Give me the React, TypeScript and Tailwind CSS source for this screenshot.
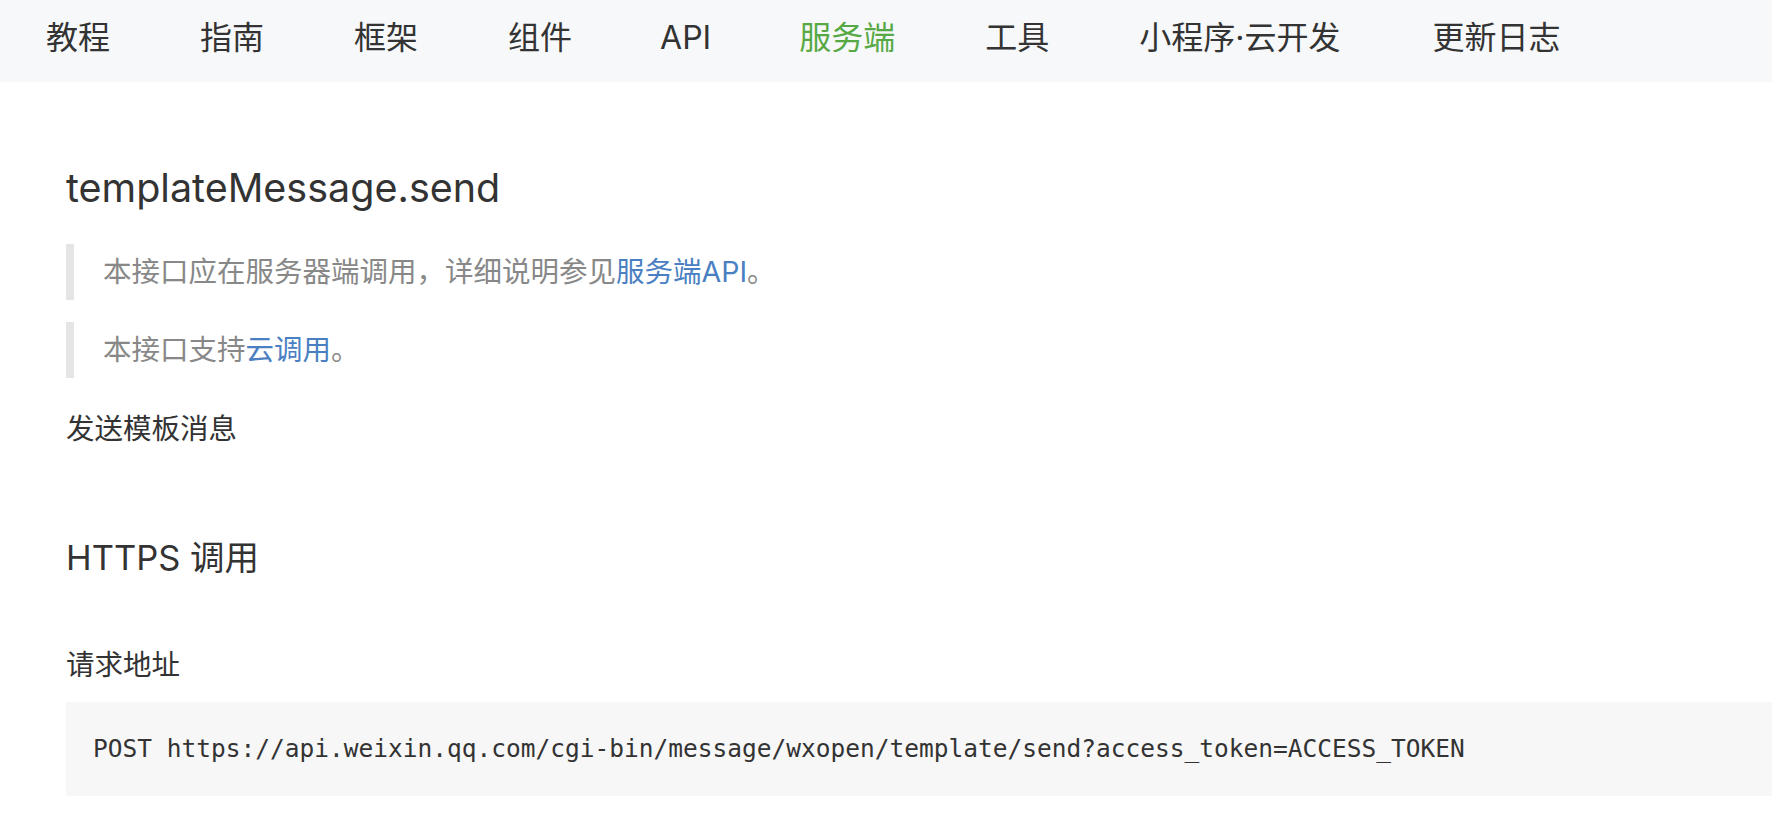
import React from "react";

const navItems = ["教程", "指南", "框架", "组件", "API", "服务端", "工具", "小程序·云开发", "更新日志"];

export default function App() {
  return (
    <div
      className="min-h-screen w-full overflow-hidden bg-white text-[#333]"
      style={{ fontFamily: 'Inter, "Noto Sans CJK SC", sans-serif' }}
    >
      <nav className="flex h-[82px] items-center gap-[90px] bg-[#f7f8fa] pb-[7px] pl-[46px] text-[32px] leading-[40px]">
        {navItems.map((item) => (
          <span
            key={item}
            className={
              item === "服务端"
                ? "text-[#56a944]"
                : item === "API"
                ? "-mr-[2px] -ml-[2px] text-[#333]"
                : item === "小程序·云开发"
                ? "mr-[2px] text-[#333]"
                : "text-[#333]"
            }
          >
            {item}
          </span>
        ))}
      </nav>

      <main className="pl-[66px]">
        <h1 className="mt-[82px] text-[39.5px] font-normal leading-[48px] text-[#333]">templateMessage.send</h1>

        <blockquote className="mt-[32px] border-l-[8px] border-[#e5e5e5] pl-[29px] text-[28.5px] leading-[56px] text-[#888]">
          本接口应在服务器端调用，详细说明参见<span className="text-[#4a80c2]">服务端API</span>。
        </blockquote>

        <blockquote className="mt-[22px] border-l-[8px] border-[#e5e5e5] pl-[29px] text-[28.5px] leading-[56px] text-[#888]">
          本接口支持<span className="text-[#4a80c2]">云调用</span>。
        </blockquote>

        <p className="mt-[31px] text-[28.5px] leading-[40px] text-[#333]">发送模板消息</p>

        <h2 className="mt-[87px] text-[34.5px] font-normal leading-[44px] text-[#333]">HTTPS 调用</h2>

        <p className="mt-[65px] text-[28.5px] leading-[40px] text-[#333]">请求地址</p>

        <div className="mt-[17px] flex h-[94px] items-center bg-[#f7f7f7] pl-[27px]">
          <code
            className="whitespace-nowrap text-[24.5px] leading-[32px] text-[#333]"
            style={{ fontFamily: '"DejaVu Sans Mono", monospace' }}
          >
            POST https://api.weixin.qq.com/cgi-bin/message/wxopen/template/send?access_token=ACCESS_TOKEN
          </code>
        </div>
      </main>
    </div>
  );
}
